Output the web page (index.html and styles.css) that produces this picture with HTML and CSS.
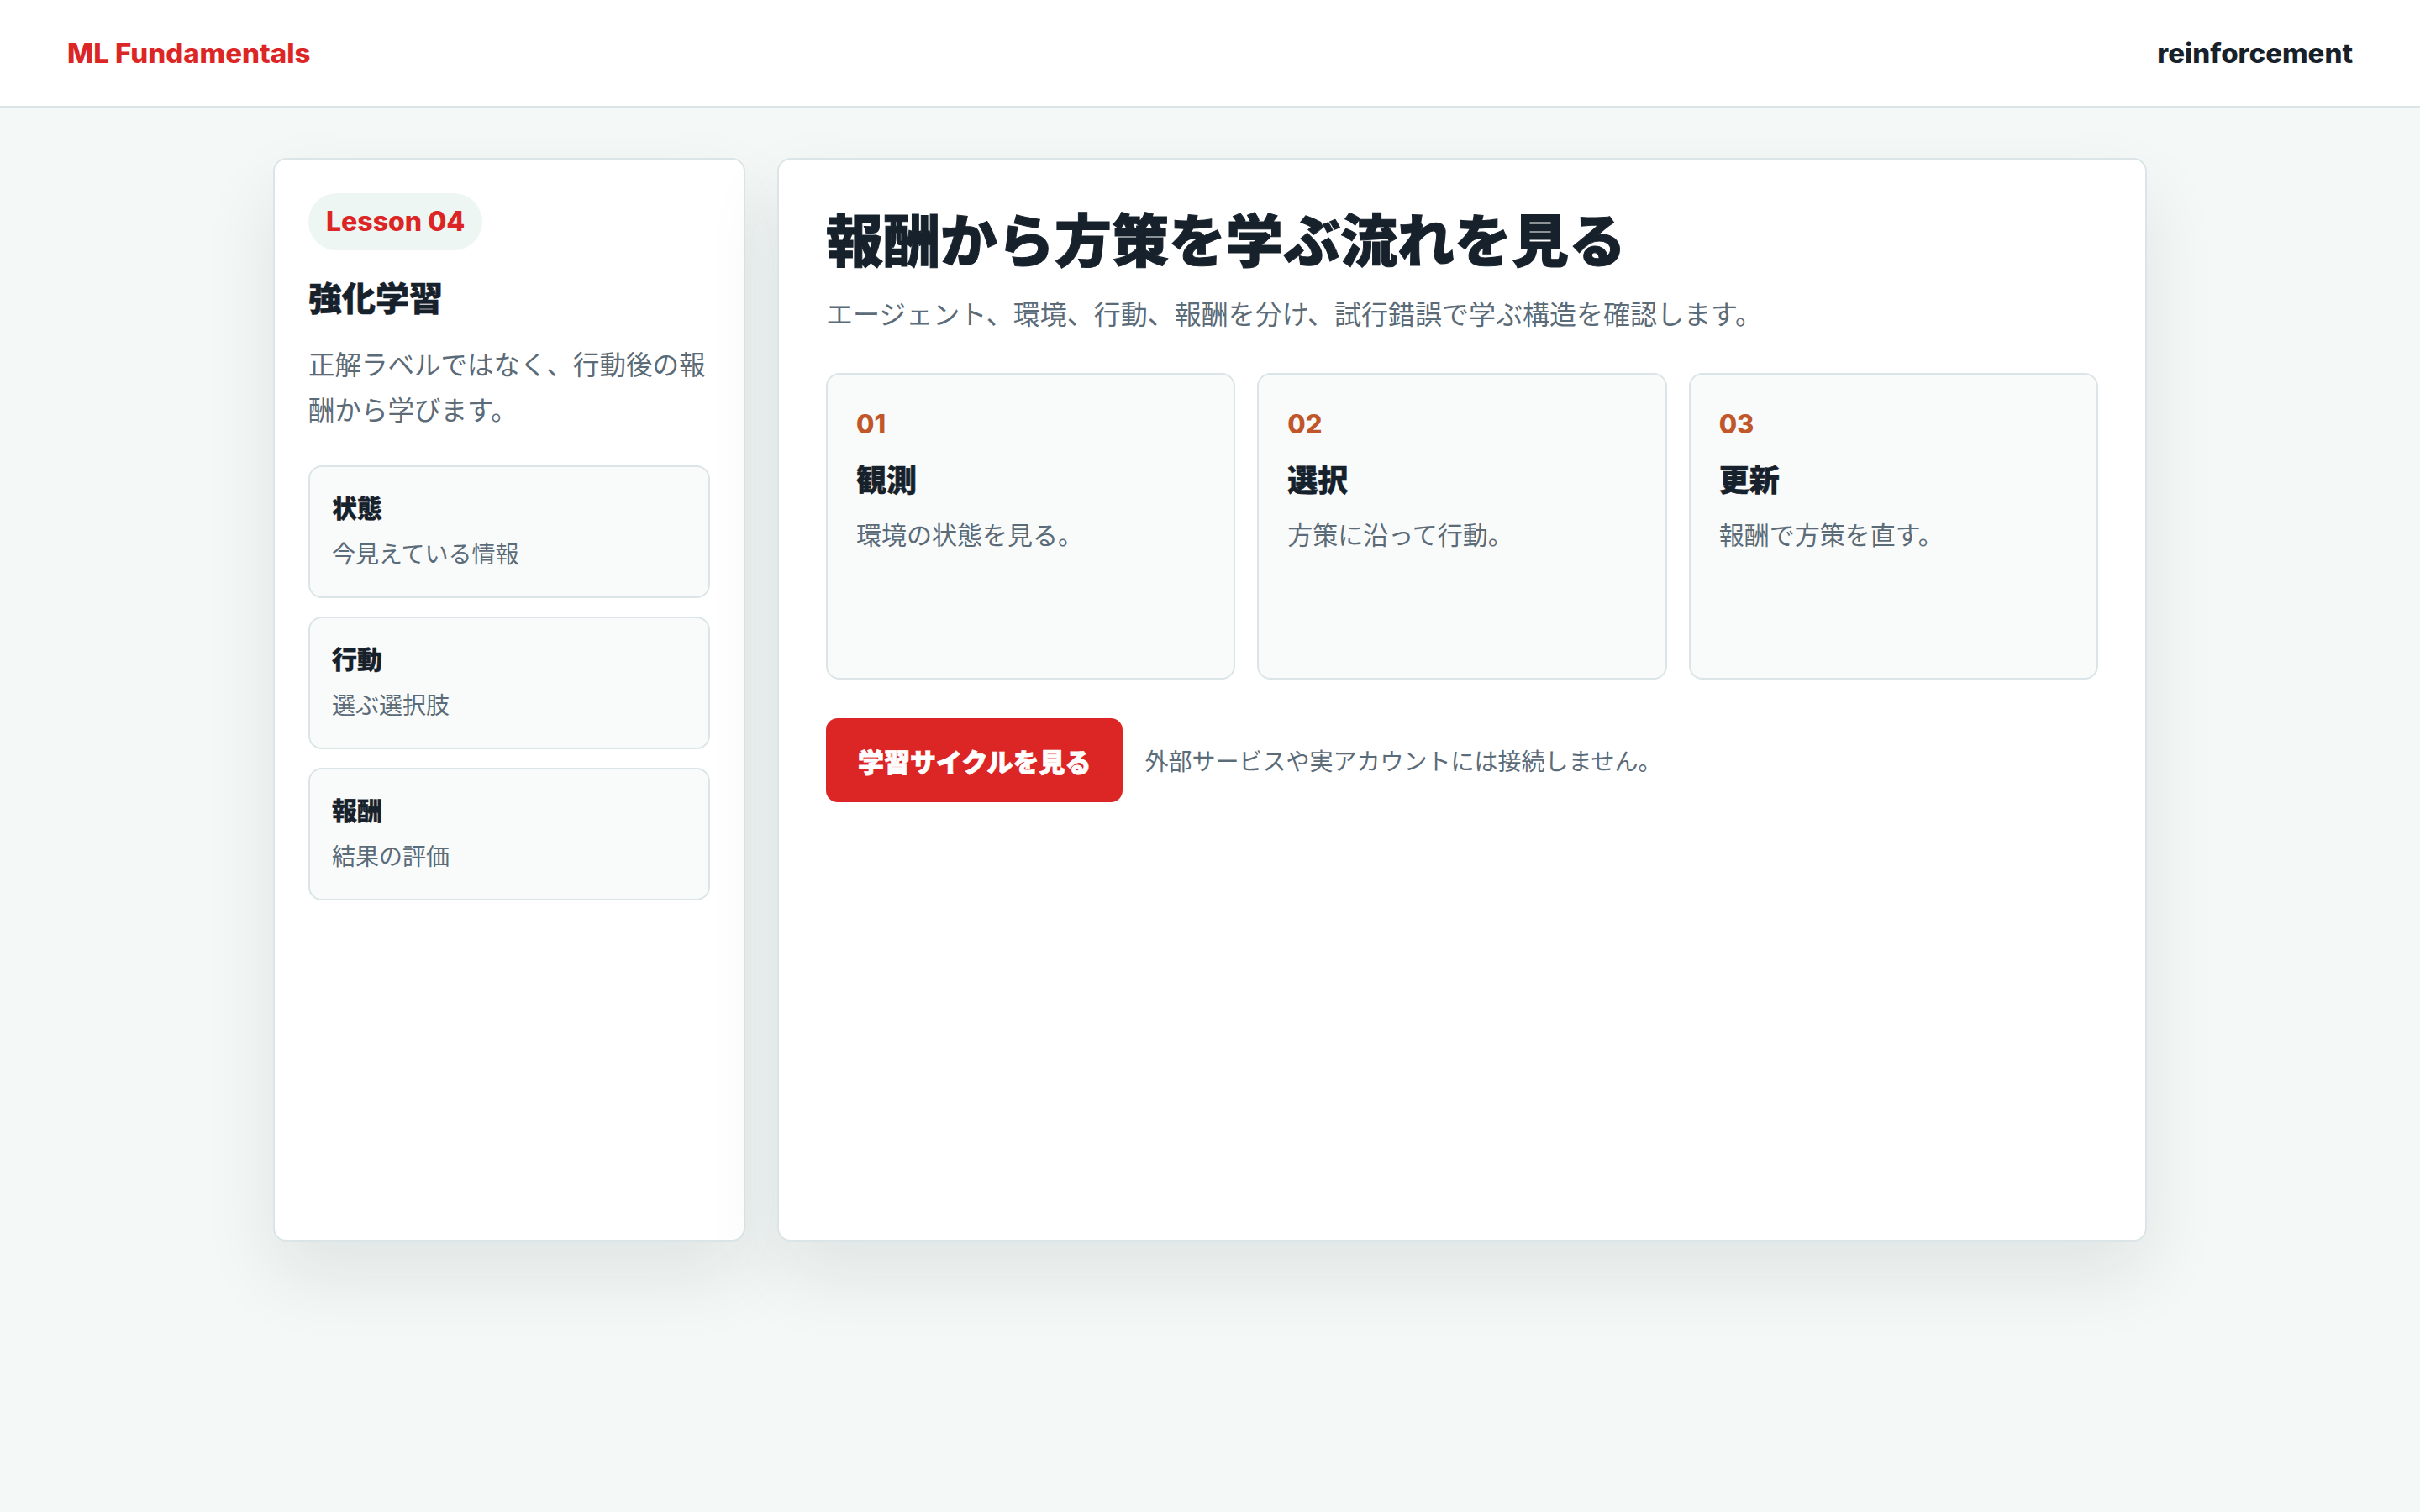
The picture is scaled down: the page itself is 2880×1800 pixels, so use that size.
FILE: index.html
```html
<!DOCTYPE html>
<html lang="ja">

<head>
    <meta charset="UTF-8">
    <title>ML Fundamentals - 強化学習</title>
    <link rel="stylesheet" href="styles.css">
</head>

<body>
    <header class="top">
        <div class="brand">ML Fundamentals</div>
        <div class="topic">reinforcement</div>
    </header>

    <main class="wrap">
        <aside class="side">
            <span class="pill">Lesson 04</span>
            <h2>強化学習</h2>
            <p class="lead">正解ラベルではなく、行動後の報酬から学びます。</p>
            <div class="terms">
                <div class="term">
                    <strong>状態</strong>
                    <span>今見えている情報</span>
                </div>
                <div class="term">
                    <strong>行動</strong>
                    <span>選ぶ選択肢</span>
                </div>
                <div class="term">
                    <strong>報酬</strong>
                    <span>結果の評価</span>
                </div>
            </div>
        </aside>

        <section class="panel">
            <h1>報酬から方策を学ぶ流れを見る</h1>
            <p class="sub">エージェント、環境、行動、報酬を分け、試行錯誤で学ぶ構造を確認します。</p>

            <div class="steps">
                <div class="step">
                    <div class="num">01</div>
                    <h3>観測</h3>
                    <p>環境の状態を見る。</p>
                </div>
                <div class="step">
                    <div class="num">02</div>
                    <h3>選択</h3>
                    <p>方策に沿って行動。</p>
                </div>
                <div class="step">
                    <div class="num">03</div>
                    <h3>更新</h3>
                    <p>報酬で方策を直す。</p>
                </div>
            </div>

            <div class="actions">
                <button class="btn" type="button">学習サイクルを見る</button>
                <span class="note">外部サービスや実アカウントには接続しません。</span>
            </div>
        </section>
    </main>
</body>

</html>
```

FILE: styles.css
```css
* {
    box-sizing: border-box;
}

body {
    margin: 0;
    min-height: 100vh;
    background-color: #f4f8f7;
    color: #17212b;
    font-family: Inter, "Noto Sans CJK JP", sans-serif;
}

.top {
    height: 128px;
    padding: 0 80px;
    display: flex;
    align-items: center;
    justify-content: space-between;
    background-color: #ffffff;
    border-bottom: 2px solid #dbe5e7;
}

.brand {
    color: #dc2626;
    font-size: 33px;
    font-weight: 800;
}

.topic {
    font-size: 33px;
    font-weight: 800;
}

.wrap {
    width: 2230px;
    margin: 60px auto 0;
    padding-bottom: 200px;
    display: grid;
    grid-template-columns: 562px 1fr;
    align-items: start;
    gap: 38px;
}

.side,
.panel {
    min-height: 1290px;
    background-color: #ffffff;
    border: 2px solid #dbe5e7;
    border-radius: 16px;
    box-shadow: 0 40px 90px rgba(20, 40, 45, 0.09);
}

.side {
    padding: 40px;
}

.pill {
    display: inline-block;
    padding: 15px 21px;
    border-radius: 40px;
    background-color: #edf6f3;
    color: #dc2626;
    font-size: 32px;
    font-weight: 800;
    line-height: 38px;
}

.side h2 {
    margin: 32px 0 0;
    font-size: 40px;
    font-weight: 900;
    line-height: 52px;
    -webkit-text-stroke: 0.5px #17212b;
}

.lead {
    margin: 26px 0 0;
    color: #5c6b78;
    font-size: 31.5px;
    line-height: 54px;
}

.terms {
    margin-top: 38px;
    display: flex;
    flex-direction: column;
    gap: 22px;
}

.term {
    padding: 29px 26px;
    display: flex;
    flex-direction: column;
    gap: 14px;
    background-color: #f9fbfb;
    border: 2px solid #dbe5e7;
    border-radius: 16px;
}

.term strong {
    font-size: 30px;
    font-weight: 900;
    line-height: 40px;
    -webkit-text-stroke: 0.4px #17212b;
}

.term span {
    color: #5c6b78;
    font-size: 28px;
    line-height: 42px;
}

.panel {
    padding: 56px;
}

.panel h1 {
    margin: 0;
    font-size: 68px;
    font-weight: 900;
    line-height: 82px;
    -webkit-text-stroke: 1px #17212b;
}

.sub {
    margin: 22px 0 0;
    color: #5c6b78;
    font-size: 32px;
    line-height: 50px;
}

.steps {
    margin-top: 44px;
    display: grid;
    grid-template-columns: repeat(3, 1fr);
    gap: 26px;
}

.step {
    min-height: 365px;
    padding: 40px 34px;
    background-color: #f9fbfb;
    border: 2px solid #dbe5e7;
    border-radius: 16px;
}

.num {
    color: #c0562a;
    font-size: 31px;
    font-weight: 800;
    line-height: 38px;
}

.step h3 {
    margin: 24px 0 0;
    font-size: 36px;
    font-weight: 900;
    line-height: 48px;
    -webkit-text-stroke: 0.5px #17212b;
}

.step p {
    margin: 17px 0 0;
    color: #5c6b78;
    font-size: 30px;
    line-height: 48px;
}

.actions {
    margin-top: 46px;
    display: flex;
    align-items: center;
    gap: 26px;
}

.btn {
    height: 100px;
    padding: 0 38px;
    border: none;
    border-radius: 14px;
    background-color: #dc2626;
    color: #ffffff;
    font-family: Inter, "Noto Sans CJK JP", sans-serif;
    font-size: 31px;
    font-weight: 900;
    -webkit-text-stroke: 0.8px #ffffff;
}

.note {
    color: #5c6b78;
    font-size: 28px;
}
```
